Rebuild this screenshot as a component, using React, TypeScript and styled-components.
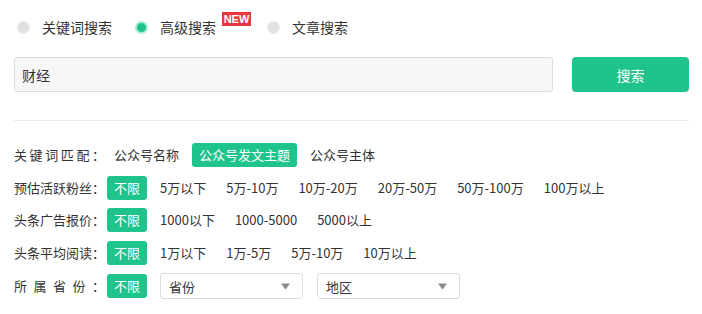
import React from 'react'
import styled, { createGlobalStyle } from 'styled-components'

const GREEN = '#1fc48d'

const GlobalStyle = createGlobalStyle`
  body {
    margin: 0;
    background: #fff;
    font-family: "Microsoft YaHei", "Noto Sans CJK SC", sans-serif;
    color: #333;
  }
`

type FilterRowData = {
  label: string
  options: string[]
  active?: number
  unlimited?: boolean
}

const rows: FilterRowData[] = [
  { label: '关键词匹配：', options: ['公众号名称', '公众号发文主题', '公众号主体'], active: 1 },
  {
    label: '预估活跃粉丝：',
    options: ['5万以下', '5万-10万', '10万-20万', '20万-50万', '50万-100万', '100万以上'],
    unlimited: true,
  },
  { label: '头条广告报价：', options: ['1000以下', '1000-5000', '5000以上'], unlimited: true },
  { label: '头条平均阅读：', options: ['1万以下', '1万-5万', '5万-10万', '10万以上'], unlimited: true },
]

const SelectArrow = () => (
  <svg width="9" height="7" viewBox="0 0 9 7">
    <path d="M0 0.5 H9 L4.5 6.5 Z" fill="#8a8a8a" />
  </svg>
)

const App = () => (
  <Page>
    <GlobalStyle />
    <RadioGroup>
      <RadioItem>
        <Radio />
        <RadioLabel>关键词搜索</RadioLabel>
      </RadioItem>
      <RadioItem>
        <Radio $checked />
        <RadioLabel>高级搜索</RadioLabel>
        <NewBadge>NEW</NewBadge>
      </RadioItem>
      <RadioItem>
        <Radio />
        <RadioLabel>文章搜索</RadioLabel>
      </RadioItem>
    </RadioGroup>

    <SearchBar>
      <SearchInput defaultValue="财经" />
      <SearchButton>搜索</SearchButton>
    </SearchBar>

    <Divider />

    <Filters>
      {rows.map((row) => (
        <FilterRow key={row.label}>
          <FilterLabel>{row.label}</FilterLabel>
          {row.unlimited && <Option $active>不限</Option>}
          {row.options.map((opt, i) => (
            <Option key={opt} $active={row.active === i}>
              {opt}
            </Option>
          ))}
        </FilterRow>
      ))}
      <FilterRow>
        <FilterLabel>所属省份：</FilterLabel>
        <Option $active>不限</Option>
        <Select>
          <span>省份</span>
          <SelectArrow />
        </Select>
        <Select>
          <span>地区</span>
          <SelectArrow />
        </Select>
      </FilterRow>
    </Filters>
  </Page>
)

const Page = styled.div`
  width: 702px;
  box-sizing: border-box;
  padding: 17px 13px 0 14px;
`

const RadioGroup = styled.div`
  display: flex;
  align-items: center;
  gap: 23px;
  height: 20px;
  padding-left: 3px;
`

const RadioItem = styled.label`
  display: flex;
  align-items: center;
  height: 20px;
`

const Radio = styled.span<{ $checked?: boolean }>`
  box-sizing: border-box;
  width: 13px;
  height: 13px;
  border-radius: 50%;
  margin-right: 12px;
  background: ${(p) => (p.$checked ? GREEN : '#e1e1e1')};
  border: ${(p) => (p.$checked ? '2px solid #a9ebd3' : '1px solid #ebebeb')};
`

const RadioLabel = styled.span`
  font-size: 14px;
  line-height: 20px;
  color: #333;
`

const NewBadge = styled.span`
  align-self: flex-start;
  margin: -5px -7px 0 6px;
  width: 29px;
  height: 14px;
  background: #e8383d;
  color: #fff;
  font-family: "Liberation Sans", Arial, sans-serif;
  font-weight: bold;
  font-size: 11px;
  line-height: 14px;
  text-align: center;
`

const SearchBar = styled.div`
  display: flex;
  gap: 19px;
  margin-top: 20px;
  height: 35px;
`

const SearchInput = styled.input`
  flex: 1;
  box-sizing: border-box;
  height: 35px;
  padding: 0 7px;
  border: 1px solid #dcdcdc;
  border-radius: 3px;
  background: #f7f7f7;
  font-family: inherit;
  font-size: 14px;
  color: #333;
  outline: none;
`

const SearchButton = styled.button`
  width: 117px;
  height: 35px;
  border: none;
  border-radius: 4px;
  background: ${GREEN};
  color: #fff;
  font-family: inherit;
  font-size: 14px;
  cursor: pointer;
`

const Divider = styled.div`
  height: 1px;
  background: #ececec;
  margin-top: 28px;
`

const Filters = styled.div`
  display: flex;
  flex-direction: column;
  gap: 8.5px;
  margin-top: 22px;
`

const FilterRow = styled.div`
  display: flex;
  align-items: center;
  gap: 6px;
  min-height: 24px;
  font-size: 13px;
`

const FilterLabel = styled.span`
  width: 91px;
  margin-right: -4px;
  padding-left: 0;
  text-align: justify;
  text-align-last: justify;
  line-height: 24px;
  white-space: nowrap;
  color: #333;
`

const Option = styled.span<{ $active?: boolean }>`
  height: 24px;
  line-height: 24px;
  padding: 0 7px;
  border-radius: 3px;
  background: ${(p) => (p.$active ? GREEN : 'transparent')};
  color: ${(p) => (p.$active ? '#fff' : '#333')};
  white-space: nowrap;
  cursor: pointer;
`

const Select = styled.div`
  box-sizing: border-box;
  display: flex;
  align-items: center;
  justify-content: space-between;
  width: 143px;
  height: 26px;
  margin-left: 7px;
  padding: 0 12px 0 8px;
  border: 1px solid #dcdcdc;
  border-radius: 3px;
  color: #333;

  & + & {
    margin-left: 8px;
  }
`

export default App
